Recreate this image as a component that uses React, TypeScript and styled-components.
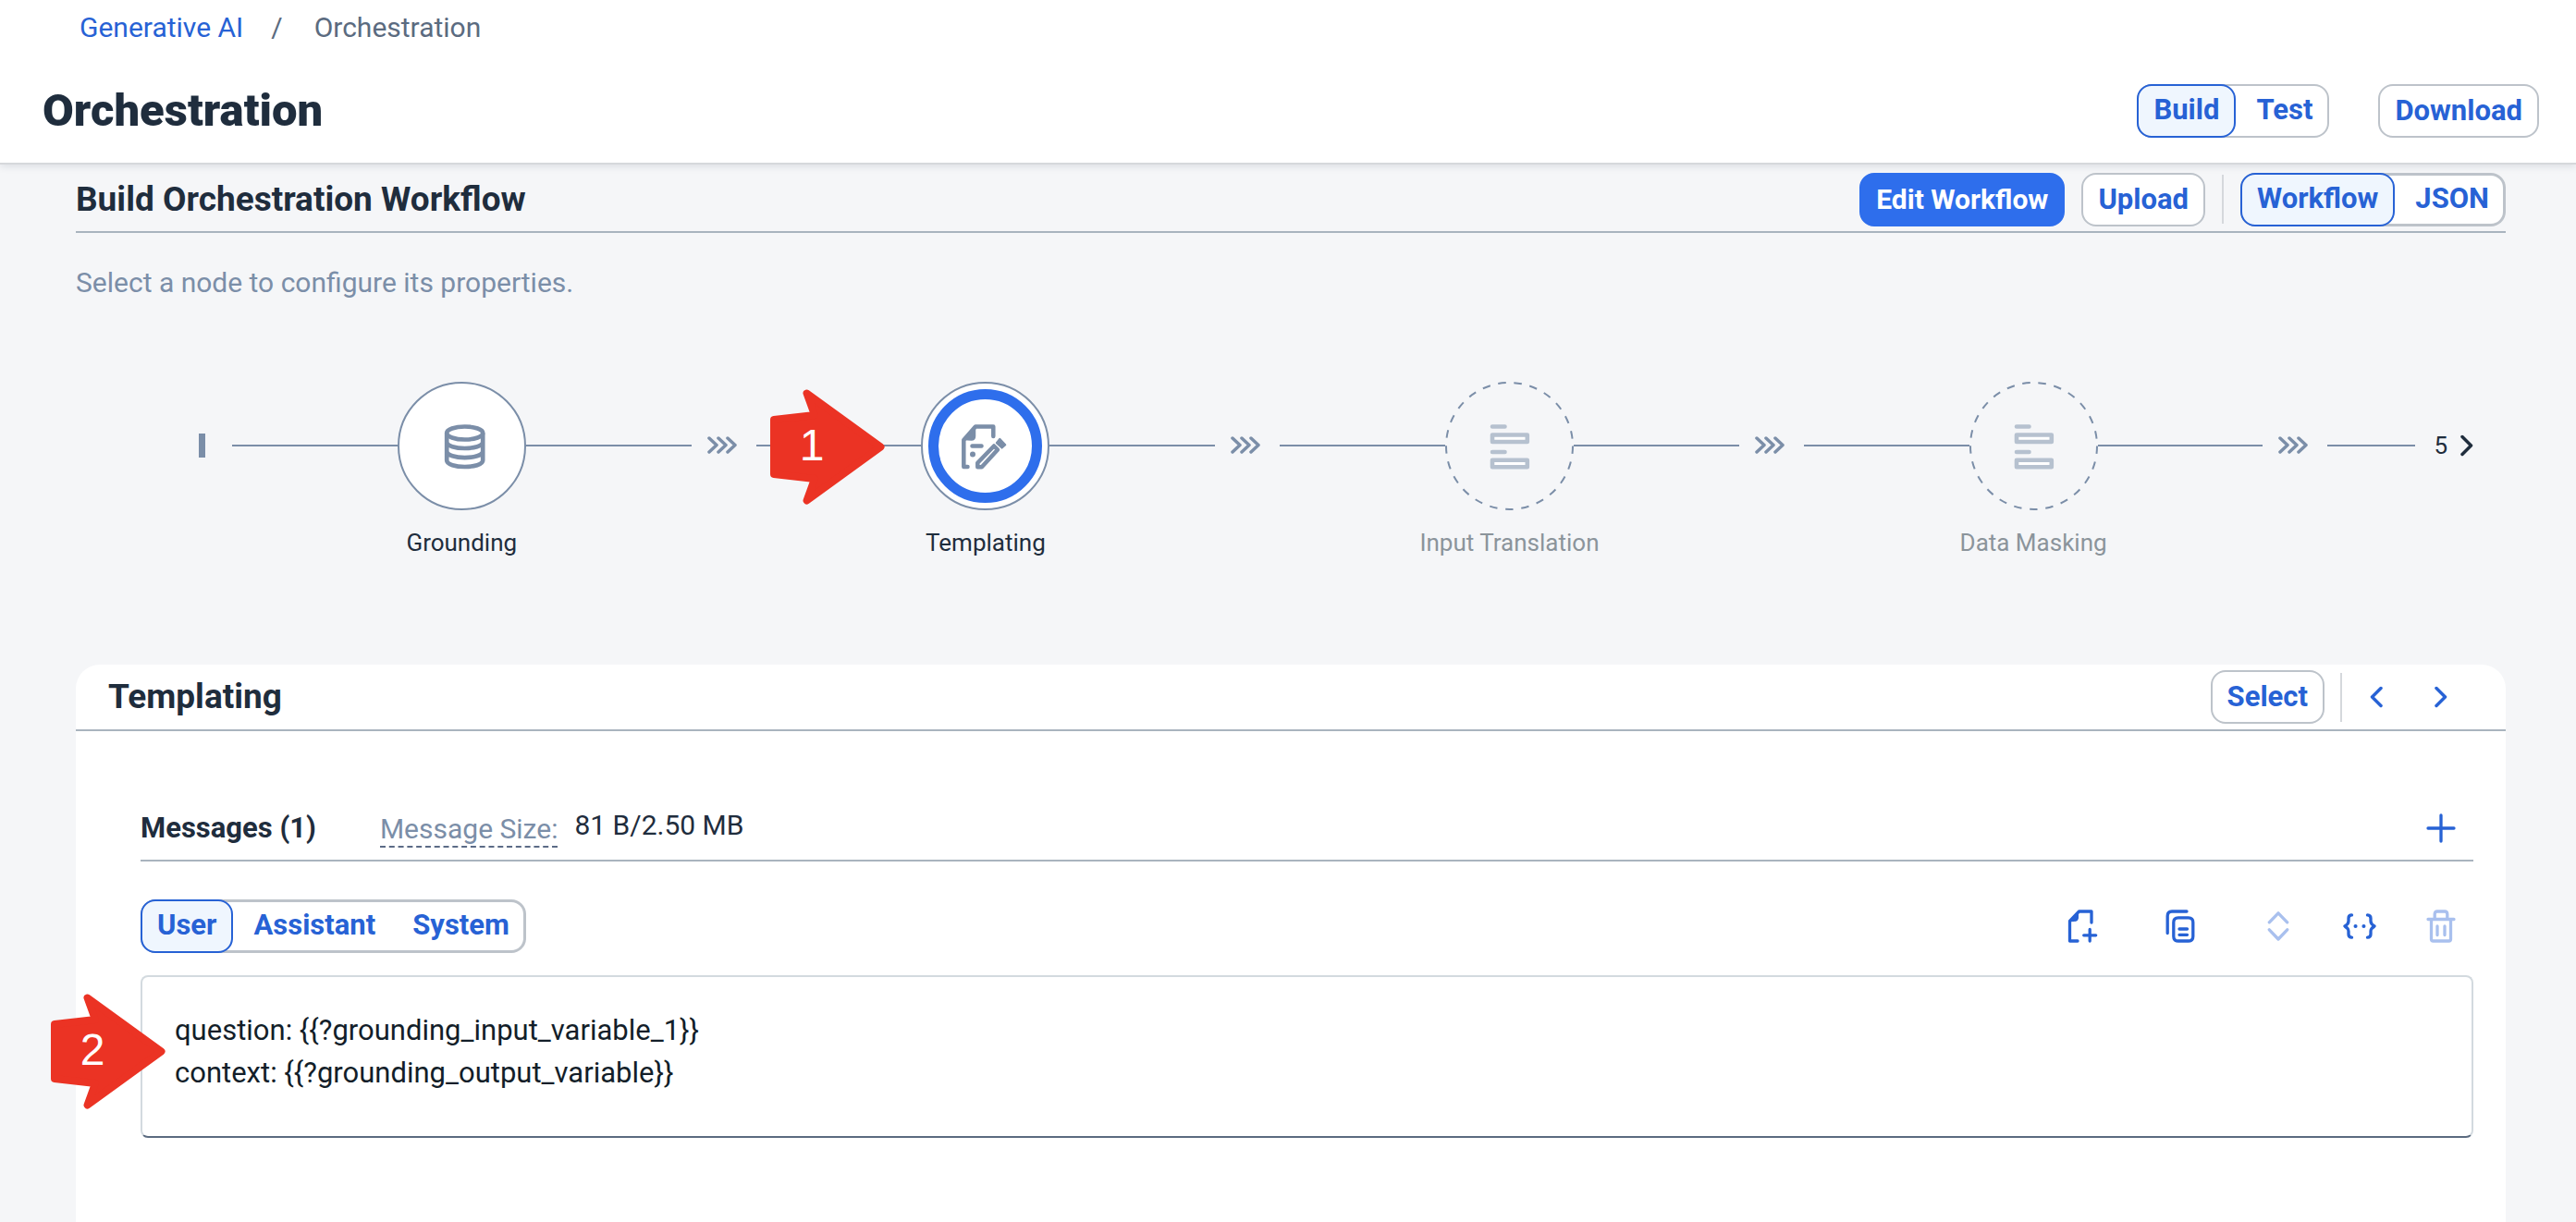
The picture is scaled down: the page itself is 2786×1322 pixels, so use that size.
import React from 'react';
import styled, { createGlobalStyle, css } from 'styled-components';

const c = {
  blue: '#2762d5', solid: '#2e6eec', tint: '#eff6fe', text: '#1f2d3d', muted: '#7b8ea8',
  line: '#7b8ea8', rule: '#a9b4be', border: '#bdc3ca', page: '#f5f6f8', red: '#eb3324',
};

const Global = createGlobalStyle`
  * { box-sizing: border-box; }
  body { margin: 0; background: ${c.page}; color: ${c.text}; font: 400 30px/36px Roboto, Arial, sans-serif; }
  button, textarea { font: inherit; color: inherit; }
  h1, h2, h3, p, ol { margin: 0; padding: 0; }
`;

const Page = styled.div`
  position: relative;
  display: flex;
  flex-direction: column;
  min-height: 100vh;
`;
const Header = styled.header`
  background: #fff;
  border-bottom: 2px solid #d6d8db;
  box-shadow: 0 2px 8px rgba(34, 53, 72, 0.12);
  padding: 12px 40px 27px 46px;
`;
const Crumbs = styled.nav`
  display: flex;
  gap: 30px;
  padding-left: 40px;
  color: #5b6b80;
`;
const Crumb = styled.a`
  color: ${c.blue};
  text-decoration: none;
`;
const Current = styled.span`
  padding-left: 4px;
`;
const Row = styled.div`
  display: flex;
  align-items: center;
  justify-content: space-between;
`;
const TitleRow = styled(Row)`
  margin-top: 43px;
`;
const Title = styled.h1`
  font-size: 49px;
  line-height: 56px;
  font-weight: 900;
`;
const Actions = styled.div<{ $gap: number }>`
  display: flex;
  align-items: center;
  gap: ${(p) => p.$gap}px;
`;
const Button = styled.button<{ $primary?: boolean }>`
  height: 58px;
  padding: 0 16px;
  border: 2px solid ${(p) => (p.$primary ? c.solid : c.border)};
  border-radius: 16px;
  background: ${(p) => (p.$primary ? c.solid : '#fff')};
  color: ${(p) => (p.$primary ? '#fff' : c.blue)};
  font-size: ${(p) => (p.$primary ? 30 : 31)}px;
  font-weight: 700;
  white-space: nowrap;
`;
const Segments = styled.div<{ $ring: number }>`
  display: flex;
  height: 58px;
  border-radius: 16px;
  background: #fff;
  box-shadow: inset 0 0 0 ${(p) => p.$ring}px ${c.border};
`;
const Segment = styled.button<{ $on?: boolean }>`
  padding: 0 16px 2px;
  border: 2px solid transparent;
  border-radius: 16px;
  background: transparent;
  color: ${c.blue};
  font-size: 31px;
  font-weight: 700;
  white-space: nowrap;
  & + & { padding-left: 20px; }
  ${(p) => p.$on && css`
    border-color: ${c.blue};
    background: ${c.tint};
  `}
`;
const Divider = styled.span`
  width: 2px;
  height: 53px;
  background: #d5d8dc;
`;
const Main = styled.main`
  display: flex;
  flex: 1;
  flex-direction: column;
  padding: 0 76px 0 82px;
`;
const SectionBar = styled(Row)`
  height: 74px;
  padding-top: 3px;
  border-bottom: 2px solid ${c.rule};
`;
const SectionTitle = styled.h2`
  font-size: 37px;
  line-height: 40px;
  font-weight: 700;
`;
const Hint = styled.p`
  margin-top: 36px;
  color: ${c.muted};
`;
const Flow = styled.ol`
  display: flex;
  height: 196px;
  margin: 87px 35px 112px 133px;
  list-style: none;
`;
const Track = styled.div`
  display: flex;
  align-items: center;
  height: 142px;
`;
const StartMark = styled.span`
  width: 7px;
  height: 26px;
  margin-right: 29px;
  background: ${c.line};
`;
const Step = styled.li`
  flex: 1;
`;
const Edge = styled.li``;
const Link = styled.span<{ $tail?: boolean }>`
  flex: ${(p) => (p.$tail ? '0 0 95px' : '1')};
  height: 2px;
  background: ${c.line};
`;
const Arrows = styled.span`
  display: flex;
  justify-content: center;
  width: 70px;
  padding-right: 4px;
`;
const Body = styled.div`
  display: flex;
  flex: 1;
  flex-direction: column;
  align-items: center;
  min-width: 0;
`;
const StepRow = styled.div`
  display: flex;
`;
const BodyTrack = styled(Track)`
  width: 100%;
`;
const Node = styled.button`
  display: flex;
  width: 139px;
  height: 139px;
  padding: 0;
  border: 0;
  background: none;
`;
const Label = styled.span<{ $off?: boolean }>`
  margin-top: 18px;
  color: ${(p) => (p.$off ? '#8b949b' : c.text)};
  font-size: 26px;
  line-height: 32px;
  white-space: nowrap;
`;
const More = styled.button`
  display: flex;
  align-items: center;
  gap: 14px;
  margin-left: 20px;
  padding: 0;
  border: 0;
  background: none;
  font-size: 26px;
`;
const Card = styled.section`
  flex: 1;
  border-radius: 26px 26px 0 0;
  background: #fff;
`;
const CardBar = styled(Row)`
  height: 72px;
  padding: 0 20px 0 35px;
  border-bottom: 2px solid ${c.rule};
`;
const CardBody = styled.div`
  padding: 70px 35px 60px 70px;
`;
const MessagesBar = styled(Row)`
  height: 71px;
  border-bottom: 2px solid ${c.rule};
`;
const MessagesTitle = styled.h3`
  font-size: 31px;
  font-weight: 700;
`;
const SizeInfo = styled.div`
  display: flex;
  align-items: flex-start;
  gap: 18px;
  margin-left: 69px;
`;
const SizeLabel = styled.span`
  padding-top: 4px;
  border-bottom: 2px dashed #5b6b86;
  color: ${c.muted};
`;
const Tools = styled.div`
  display: flex;
  align-items: center;
`;
const MessageTools = styled(Actions)`
  padding-right: 17px;
`;
const IconButton = styled.button<{ $w: number }>`
  display: flex;
  align-items: center;
  justify-content: center;
  width: ${(p) => p.$w}px;
  height: 52px;
  padding: 0;
  border: 0;
  background: none;
  color: ${c.blue};
  &:disabled { color: #a9c0ee; }
`;
const MessageBar = styled(Row)`
  margin-top: 41px;
`;
const Editor = styled.textarea`
  display: block;
  width: 100%;
  height: 176px;
  margin-top: 24px;
  padding: 35px;
  border: 2px solid #d3dadf;
  border-bottom-color: #5b6b80;
  border-radius: 8px;
  outline: 0;
  resize: none;
  background: #fff;
  color: #131e29;
  font-size: 31px;
  line-height: 46px;
`;
const Callout = styled.div<{ $x: number; $y: number }>`
  position: absolute;
  left: ${(p) => p.$x}px;
  top: ${(p) => p.$y}px;
  display: grid;
  width: 124px;
  height: 125px;
  & > * { grid-area: 1 / 1; }
`;
const CalloutNumber = styled.span`
  width: 90px;
  padding-bottom: 4px;
  align-self: center;
  color: #fff;
  font: 400 48px/54px "Liberation Sans", Arial, sans-serif;
  text-align: center;
`;

const Marker = ({ x, y, n }: { x: number; y: number; n: number }) => (
  <Callout $x={x} $y={y}>
    <svg width="124" height="125" viewBox="0 0 124 125" fill={c.red} stroke={c.red} strokeWidth="8" strokeLinejoin="round">
      <path d="M4 33 L48 28 L39.500 4.500 L119.500 62.500 L39.500 120.500 L48 97 L4 92 Z" />
    </svg>
    <CalloutNumber>{n}</CalloutNumber>
  </Callout>
);

const Chevron = ({ left }: { left?: boolean }) => (
  <svg width="14" height="24" viewBox="0 0 14 24" fill="none" stroke="currentColor" strokeWidth="3.500" strokeLinecap="round" strokeLinejoin="round">
    <path d={left ? 'M12 2.500 L2.500 12 L12 21.500' : 'M2 2.500 L11.500 12 L2 21.500'} />
  </svg>
);

const TripleChevron = () => (
  <svg width="32" height="20" viewBox="0 0 32 20" fill="none" stroke={c.line} strokeWidth="3.500" strokeLinecap="round" strokeLinejoin="round">
    <path d="M2 2 L10 9.500 L2 17 M12 2 L20 9.500 L12 17 M22 2 L30 9.500 L22 17" />
  </svg>
);

type Kind = 'database' | 'template' | 'form';

const NodeArt = ({ kind, active }: { kind: Kind; active?: boolean }) => (
  <svg width="139" height="139" viewBox="0 0 139 139" fill="none" stroke={c.line}>
    <circle cx="69.500" cy="69.500" r="68.500" strokeWidth="2" fill={kind === 'form' ? 'none' : '#fff'} strokeDasharray={kind === 'form' ? '8.500 8.720' : undefined} />
    {active && <circle cx="69.500" cy="69.500" r="56" stroke={c.solid} strokeWidth="11" />}
    {kind === 'database' && (
      <g strokeWidth="4.700">
        <ellipse cx="72.700" cy="55.500" rx="19.500" ry="7" />
        <path d="M53.200 55.500 V85 C53.200 94.300 92.200 94.300 92.200 85 V55.500 M53.200 65 C53.200 74.300 92.200 74.300 92.200 65 M53.200 75 C53.200 84.500 92.200 84.500 92.200 75" />
      </g>
    )}
    {kind === 'template' && (
      <g strokeWidth="4.500" strokeLinecap="round" strokeLinejoin="round">
        <path d="M50.500 92 H46.300 V63 L59 48.500 H78.300 V59" />
        <path d="M46.500 62.500 L58.500 49 V59 Q58.500 63 54.500 63 Z" fill={c.line} strokeWidth="1.500" />
        <path d="M55.500 69.500 H65.500" />
        <circle cx="56" cy="78.500" r="3" fill={c.line} stroke="none" />
        <path d="M61.300 92.300 V87.800 L79 69.500 L83 73.500 L65.800 92.300 Z" />
        <path d="M81.800 66.200 L85.200 61.800 L91.300 68.200 L87.600 71.600 Z" fill={c.line} strokeWidth="2" />
      </g>
    )}
    {kind === 'form' && (
      <g stroke="#b6c1cf" strokeWidth="4.600" strokeLinecap="round" strokeLinejoin="round">
        <path d="M51 48.500 H64.500 M51 76 H64.500" />
        <path d="M51 57.500 H88.800 V65 H51 Z M51 84.800 H88.800 V92.200 H51 Z" fill="#fff" />
      </g>
    )}
  </svg>
);

const Glyph = ({ d, children }: { d: string; children?: React.ReactNode }) => (
  <svg width="36" height="36" viewBox="0 0 36 36" fill="none" stroke="currentColor" strokeWidth="3.300" strokeLinecap="round" strokeLinejoin="round">
    <path d={d} />
    {children}
  </svg>
);

const steps: { label: string; kind: Kind; active?: boolean }[] = [
  { label: 'Grounding', kind: 'database' },
  { label: 'Templating', kind: 'template', active: true },
  { label: 'Input Translation', kind: 'form' },
  { label: 'Data Masking', kind: 'form' },
];

const Switcher = ({ name, items, ring = 2 }: { name: string; items: string[]; ring?: number }) => (
  <Segments role="group" aria-label={name} $ring={ring}>
    {items.map((item, i) => (
      <Segment key={item} $on={i === 0} aria-pressed={i === 0}>{item}</Segment>
    ))}
  </Segments>
);

export default function App() {
  return (
    <Page>
      <Global />
      <Header>
        <Crumbs aria-label="Breadcrumb">
          <Crumb href="#generative-ai">Generative AI</Crumb>
          <span>/</span>
          <Current>Orchestration</Current>
        </Crumbs>
        <TitleRow>
          <Title>Orchestration</Title>
          <Actions $gap={53}>
            <Switcher name="Mode" items={['Build', 'Test']} />
            <Button>Download</Button>
          </Actions>
        </TitleRow>
      </Header>
      <Main>
        <SectionBar>
          <SectionTitle>Build Orchestration Workflow</SectionTitle>
          <Actions $gap={18}>
            <Button $primary>Edit Workflow</Button>
            <Button>Upload</Button>
            <Divider />
            <Switcher name="View" items={['Workflow', 'JSON']} ring={3} />
          </Actions>
        </SectionBar>
        <Hint>Select a node to configure its properties.</Hint>
        <Flow>
          <Edge><Track><StartMark /></Track></Edge>
          {steps.map((s) => (
            <Step key={s.label}>
              <StepRow>
                <Body>
                  <BodyTrack>
                    <Link />
                    <Node aria-label={s.label}><NodeArt kind={s.kind} active={s.active} /></Node>
                    <Link />
                  </BodyTrack>
                  <Label $off={s.kind === 'form'}>{s.label}</Label>
                </Body>
                <Track><Arrows><TripleChevron /></Arrows></Track>
              </StepRow>
            </Step>
          ))}
          <Edge>
            <Track>
              <Link $tail />
              <More>5 <Chevron /></More>
            </Track>
          </Edge>
        </Flow>
        <Card>
          <CardBar>
            <SectionTitle>Templating</SectionTitle>
            <Actions $gap={17}>
              <Button>Select</Button>
              <Divider />
              <Tools>
                <IconButton $w={40} aria-label="Previous"><Chevron left /></IconButton>
                <IconButton $w={100} aria-label="Next"><Chevron /></IconButton>
              </Tools>
            </Actions>
          </CardBar>
          <CardBody>
            <MessagesBar>
              <Tools>
                <MessagesTitle>Messages (1)</MessagesTitle>
                <SizeInfo>
                  <SizeLabel>Message Size:</SizeLabel>
                  <span>81 B/2.50 MB</span>
                </SizeInfo>
              </Tools>
              <IconButton $w={70} aria-label="Add message"><Glyph d="M18 4 V32 M4 18 H32" /></IconButton>
            </MessagesBar>
            <MessageBar>
              <Switcher name="Role" items={['User', 'Assistant', 'System']} ring={3} />
              <MessageTools $gap={52}>
                <Actions $gap={70}>
                  <IconButton $w={36} aria-label="New template">
                    <Glyph d="M13 34 H4.500 V12.500 L14.500 2 H28 V14 M26.200 21.500 V34 M19.700 27.800 H32.700">
                      <path d="M4.500 12.500 L13.500 3 V9 Q13.500 12.500 10 12.500 Z" fill="currentColor" strokeWidth="1" />
                    </Glyph>
                  </IconButton>
                  <IconButton $w={36} aria-label="Copy">
                    <Glyph d="M4.200 25.500 V7 Q4.200 2 9 2 H25 M15.800 8.800 H26.800 Q31.800 8.800 31.800 13.800 V29 Q31.800 34 26.800 34 H15.800 Q10.800 34 10.800 29 V13.800 Q10.800 8.800 15.800 8.800 Z M17 21 H25.500 M17 27.300 H25.500" />
                  </IconButton>
                  <IconButton $w={36} disabled aria-label="Reorder">
                    <Glyph d="M8.300 13.800 L18 3.800 L27.700 13.800 M8.300 21.800 L18 32 L27.700 21.800" />
                  </IconButton>
                </Actions>
                <IconButton $w={36} aria-label="Insert variable">
                  <Glyph d="M9.500 5.800 Q6 6 6 9.500 V12.500 Q6 15.500 2 18 Q6 20.500 6 23.500 V26.500 Q6 30 9.500 30.200 M26.500 5.800 Q30 6 30 9.500 V12.500 Q30 15.500 34 18 Q30 20.500 30 23.500 V26.500 Q30 30 26.500 30.200">
                    <path d="M13.500 18 H13.600 M22.400 18 H22.500" strokeWidth="4" />
                  </Glyph>
                </IconButton>
                <IconButton $w={36} disabled aria-label="Delete">
                  <Glyph d="M4 10.500 H32 M11.200 10 V5 Q11.200 2 14 2 H22 Q24.800 2 24.800 5 V10 M7.500 11 V32 Q7.500 34 9.500 34 H26.500 Q28.500 34 28.500 32 V11 M14 18 V27.500 M22 18 V27.500" />
                </IconButton>
              </MessageTools>
            </MessageBar>
            <Editor aria-label="User message" spellCheck={false} defaultValue={'question: {{?grounding_input_variable_1}}\ncontext: {{?grounding_output_variable}}'} />
          </CardBody>
        </Card>
      </Main>
      <Marker x={833} y={421} n={1} />
      <Marker x={55} y={1075} n={2} />
    </Page>
  );
}
